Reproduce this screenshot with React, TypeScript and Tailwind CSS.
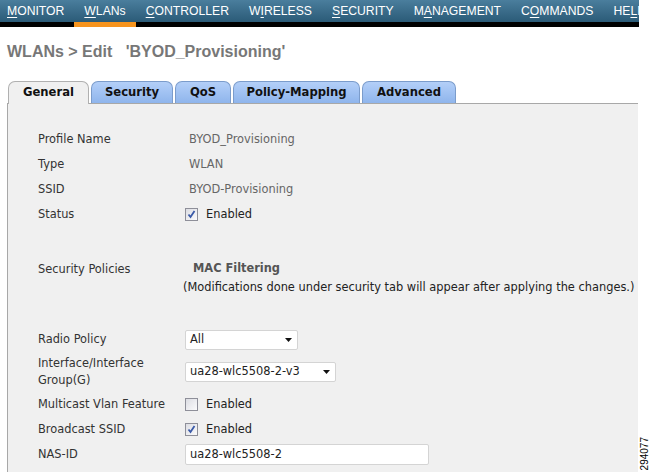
import React from 'react';

const navItems = [
  { pre: '', key: 'M', post: 'ONITOR' },
  { pre: '', key: 'W', post: 'LANs', active: true },
  { pre: '', key: 'C', post: 'ONTROLLER' },
  { pre: 'W', key: 'I', post: 'RELESS' },
  { pre: '', key: 'S', post: 'ECURITY' },
  { pre: 'M', key: 'A', post: 'NAGEMENT' },
  { pre: 'C', key: 'O', post: 'MMANDS' },
  { pre: 'HE', key: 'L', post: 'P' },
];

const tabs = [
  { label: 'General', w: 'w-[81px]', active: true },
  { label: 'Security', w: 'w-[82px]' },
  { label: 'QoS', w: 'w-[56px]' },
  { label: 'Policy-Mapping', w: 'w-[127px]' },
  { label: 'Advanced', w: 'w-[94px]' },
];

const Checkbox: React.FC<{ checked?: boolean }> = ({ checked }) => (
  <span className="w-[13px] h-[13px] border border-[#8e8f99] bg-gradient-to-br from-[#dcdde3] to-[#fbfbfc] flex items-center justify-center shrink-0">
    {checked && (
      <svg width="9" height="9" viewBox="0 0 9 9">
        <path d="M1.5 4.5 L3.5 7 L7.5 1" fill="none" stroke="#3a5aa8" strokeWidth="1.8" />
      </svg>
    )}
  </span>
);

const Select: React.FC<{ value: string; w: string }> = ({ value, w }) => (
  <div className={`${w} h-[20px] bg-white border border-[#d4d4d4] rounded-[2px] flex items-center justify-between pl-[4px] pr-[5px] text-[#222]`}>
    <span>{value}</span>
    <svg width="7" height="4" viewBox="0 0 7 4">
      <path d="M0 0 H7 L3.5 4 Z" fill="#111" />
    </svg>
  </div>
);

const Row: React.FC<{ label: React.ReactNode; h?: string; children?: React.ReactNode }> = ({ label, h = 'h-[25px]', children }) => (
  <div className={`flex items-center ${h}`}>
    <div className="w-[147px] shrink-0 text-[#333] leading-[17px]">{label}</div>
    <div className="flex items-center">{children}</div>
  </div>
);

const Enabled: React.FC<{ checked?: boolean }> = ({ checked }) => (
  <div className="flex items-center gap-[8px] text-[#222]">
    <Checkbox checked={checked} />
    <span>Enabled</span>
  </div>
);

export default function App() {
  return (
    <div className="w-[652px] h-[472px] overflow-hidden bg-white font-['DejaVu_Sans',sans-serif] text-[11.4px]">
      {/* top menu */}
      <div className="w-[639px] overflow-hidden flex bg-gradient-to-b from-[#4a7e9d] to-[#24536f] font-['Liberation_Sans',Arial,sans-serif] text-[12.2px] text-white whitespace-nowrap">
        {navItems.map((n, i) => (
          <div key={i} className="flex flex-col shrink-0">
            <div className={`h-[22px] flex items-center ${i === 0 ? 'pl-[7px]' : 'pl-[10px]'} pr-[10px]`}>
              {n.pre}
              <span className="underline underline-offset-2">{n.key}</span>
              {n.post}
            </div>
            <div className={`h-[5px] ${n.active ? 'bg-[#f7941d]' : 'bg-black'}`} />
          </div>
        ))}
        <div className="flex-1 flex flex-col">
          <div className="h-[22px]" />
          <div className="h-[5px] bg-black" />
        </div>
      </div>

      <div className="px-[7px] pt-[13px] h-[54px] font-['Liberation_Sans',Arial,sans-serif] font-bold text-[16px] text-[#777] whitespace-pre">
        {"WLANs > Edit   'BYOD_Provisioning'"}
      </div>

      <div className="flex">
        <div className="w-[638px] shrink-0">
          {/* tabs */}
          <div className="flex gap-[2px] pl-[8px] h-[22px] items-end">
            {tabs.map((t) => (
              <div
                key={t.label}
                className={`${t.w} h-[22px] rounded-t-[7px] border border-b-0 flex items-center justify-center font-bold text-[11.6px] text-[#111] ${
                  t.active
                    ? 'bg-[#f0f0f0] border-[#b0b0b0] relative z-10 h-[23px] -mb-[1px]'
                    : 'bg-gradient-to-b from-[#b3cff8] to-[#8fb5ec] border-[#7b9ccb]'
                }`}
              >
                {t.label}
              </div>
            ))}
          </div>

          {/* panel */}
          <div className="ml-[7px] h-[369px] bg-[#f0f0f0] border-l border-t border-[#a8a8a8] pl-[30px] pt-[23px]">
            <Row label="Profile Name"><span className="pl-[4px] text-[#666]">BYOD_Provisioning</span></Row>
            <Row label="Type"><span className="pl-[4px] text-[#666]">WLAN</span></Row>
            <Row label="SSID"><span className="pl-[4px] text-[#666]">BYOD-Provisioning</span></Row>
            <Row label="Status"><Enabled checked /></Row>

            <div className="mt-[32px]">
              <Row label="Security Policies" h="h-[20px]">
                <span className="pl-[8px] font-bold text-[#555]">MAC Filtering</span>
              </Row>
              <div className="h-[18px] flex items-center pl-[145px] text-[#222] whitespace-nowrap">
                (Modifications done under security tab will appear after applying the changes.)
              </div>
            </div>

            <div className="mt-[30px]">
              <Row label="Radio Policy"><Select value="All" w="w-[113px]" /></Row>
              <Row label={<>Interface/Interface<br />Group(G)</>} h="h-[40px]">
                <Select value="ua28-wlc5508-2-v3" w="w-[151px]" />
              </Row>
              <Row label="Multicast Vlan Feature"><Enabled /></Row>
              <Row label="Broadcast SSID"><Enabled checked /></Row>
              <Row label="NAS-ID">
                <div className="w-[244px] h-[21px] bg-white border border-[#d4d4d4] rounded-[2px] flex items-center pl-[4px] text-[#222]">
                  ua28-wlc5508-2
                </div>
              </Row>
            </div>
          </div>
        </div>

        {/* figure number */}
        <div className="flex-1 flex flex-col justify-end pb-[2px] items-center">
          <span className="[writing-mode:vertical-rl] rotate-180 font-['Liberation_Sans',Arial,sans-serif] text-[10px] text-black leading-none">
            294077
          </span>
        </div>
      </div>
    </div>
  );
}
